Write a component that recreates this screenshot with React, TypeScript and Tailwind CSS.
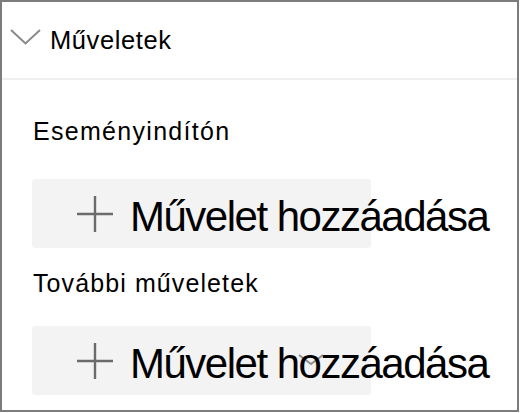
import React from 'react';

const Plus: React.FC = () => (
    <svg width="36" height="36" viewBox="0 0 36 36" className="shrink-0">
        <path d="M18 0 V36 M0 18 H36" stroke="#6b6b6b" strokeWidth={2.4} fill="none" />
    </svg>
);

const AddButton: React.FC<{ withChevron?: boolean }> = ({ withChevron }) => (
    <div className="relative flex items-center w-[339px] h-[69px] rounded-[3px] bg-[#f3f3f3] pl-[45px]">
        {withChevron && (
            <svg width="26" height="11" viewBox="0 0 26 11" className="absolute left-[266px] top-[28px]">
                <path d="M1 1 L13 10 L25 1" stroke="#8f8f8f" strokeWidth={2} fill="none" />
            </svg>
        )}
        <Plus />
        <span className="relative z-10 ml-[17px] pt-[6px] text-[42px] leading-none tracking-[-1.5px] text-black whitespace-nowrap">
            Művelet hozzáadása
        </span>
    </div>
);

export default function App() {
    return (
        <div className="w-[519px] h-[412px] border-2 border-[#7c7c7c] bg-white overflow-visible font-['Liberation_Sans',Arial,sans-serif]">
            {/* Header */}
            <div className="flex items-center h-[76px] pl-[8px]">
                <svg width="31" height="16" viewBox="0 0 31 16" className="shrink-0 mb-[6px]">
                    <path d="M1 1 L15.5 14.5 L30 1" stroke="#8a8a8a" strokeWidth={2} fill="none" />
                </svg>
                <span className="ml-[9px] text-[25.5px] tracking-[0.6px] text-black">Műveletek</span>
            </div>
            <div className="h-[2px] bg-[#efefef]" />

            {/* Body */}
            <div className="pl-[30px] pt-[36px]">
                <div className="pl-[1px] text-[25px] leading-[1.2] tracking-[1.3px] text-black">Eseményindítón</div>
                <div className="mt-[33px]">
                    <AddButton />
                </div>
                <div className="mt-[20px] pl-[1px] text-[25px] leading-[1.2] tracking-[1.1px] text-black">További műveletek</div>
                <div className="mt-[28px]">
                    <AddButton withChevron />
                </div>
            </div>
        </div>
    );
}
